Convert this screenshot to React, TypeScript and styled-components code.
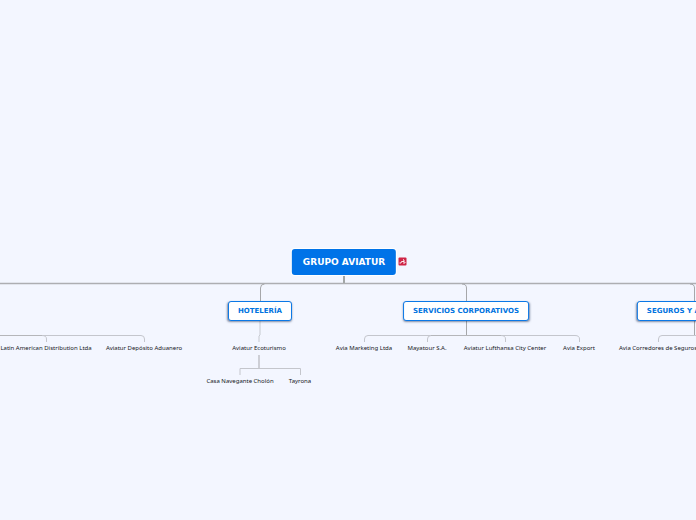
import React from "react";
import styled, { createGlobalStyle } from "styled-components";

const GlobalStyle = createGlobalStyle`
  body { margin: 0; background: #f3f6ff; }
  * { box-sizing: border-box; }
`;

const Canvas = styled.main`
  position: relative;
  width: 100%;
  min-height: 100vh;
  overflow: hidden;
  background: #f3f6ff;
  font-family: "DejaVu Sans", sans-serif;
`;

const Connectors = styled.svg`
  position: absolute;
  top: 0;
  left: 0;
  width: 100%;
  height: 100%;
  fill: none;
`;

const Node = styled.div<{ $x: number; $y: number }>`
  position: absolute;
  left: ${(p) => p.$x}px;
  top: ${(p) => p.$y}px;
  margin: 0;
  transform: translate(-50%, -50%);
  white-space: nowrap;
`;

const RootNode = styled(Node)`
  padding: 8px 11px;
  border-radius: 3px;
  background: #0073e8;
  box-shadow: 0 0 0 1px #ffffff;
  color: #ffffff;
  font-size: 9px;
  font-weight: 700;
  line-height: 10px;
`;

const BranchNode = styled(Node)`
  padding: 5px 9px;
  border: 1px solid #0b78e6;
  border-radius: 3px;
  background: #ffffff;
  box-shadow: 0 1px 2px rgba(20, 40, 80, 0.5);
  color: #0073e0;
  font-size: 7px;
  font-weight: 700;
  line-height: 8px;
`;

const LeafNode = styled(Node)`
  color: #15161c;
  font-family: "Noto Sans", "DejaVu Sans", sans-serif;
  font-size: 6px;
  line-height: 8px;
`;

const Marker = styled.svg`
  position: absolute;
  left: 398px;
  top: 257px;
  width: 9px;
  height: 9px;
`;

const branches = [
  { label: "HOTELERÍA", x: 260, y: 311 },
  { label: "SERVICIOS CORPORATIVOS", x: 466, y: 311 },
  { label: "SEGUROS Y ASISTENCIA", x: 694, y: 311 },
];

const leaves = [
  { label: "Latin American Distribution Ltda", x: 46, y: 348 },
  { label: "Aviatur Depósito Aduanero", x: 144, y: 348 },
  { label: "Aviatur Ecoturismo", x: 259, y: 348 },
  { label: "Casa Navegante Cholón", x: 240, y: 381 },
  { label: "Tayrona", x: 300, y: 381 },
  { label: "Avia Marketing Ltda", x: 364, y: 348 },
  { label: "Mayatour S.A.", x: 427, y: 348 },
  { label: "Aviatur Lufthansa City Center", x: 505, y: 348 },
  { label: "Avia Export", x: 579, y: 348 },
  { label: "Avia Corredores de Seguros", x: 658, y: 348 },
];

export default function App() {
  return (
    <>
      <GlobalStyle />
      <Canvas>
        <Connectors aria-hidden="true">
          <path d="M344 276V284" stroke="#a2a6a6" strokeWidth="2" />
          <path d="M0 283.5H696" stroke="#adaeb2" strokeWidth="1.4" />
          <path d="M260.5 301V288Q260.5 284 264.5 284M462 284Q466.5 284 466.5 288V335M690 284Q694.5 284 694.5 288V335" stroke="#a6a7aa" />
          <path d="M260 321V335L259 336V342" stroke="#c6c9d0" />
          <path d="M0 335.5H141Q144.5 335.5 144.5 339V342M42 335.5Q46.5 335.5 46.5 339V342" stroke="#c4c6cd" />
          <path d="M364.5 342V339Q364.5 335.5 368 335.5H575Q579.5 335.5 579.5 339V342M427.5 342V339Q427.5 335.5 431 335.5M501 335.5Q505.5 335.5 505.5 339V342M658.5 342V339Q658.5 335.5 662 335.5H696" stroke="#c4c6cd" />
          <path d="M0 335.5H42M431 335.5H501" stroke="#b5b6ba" />
          <path d="M259 355V368.5" stroke="#c4c6cc" strokeWidth="1.6" />
          <path d="M240 375V368.5H300.5V375" stroke="#c4c6cc" />
        </Connectors>
        <RootNode as="h1" $x={344} $y={262}>GRUPO AVIATUR</RootNode>
        <Marker viewBox="0 0 9 9" role="img" aria-label="PDF">
          <rect x="0.5" y="0.5" width="8" height="8" rx="1" fill="#cf2547" />
          <path d="M1.5 6H3L3.5 4.5H6M5 2.5L6 3V7M6.5 5.5H7.5" fill="none" stroke="#fff" strokeWidth="0.9" />
        </Marker>
        {branches.map((b) => (
          <BranchNode key={b.label} $x={b.x} $y={b.y}>{b.label}</BranchNode>
        ))}
        {leaves.map((l) => (
          <LeafNode key={l.label} $x={l.x} $y={l.y}>{l.label}</LeafNode>
        ))}
      </Canvas>
    </>
  );
}
